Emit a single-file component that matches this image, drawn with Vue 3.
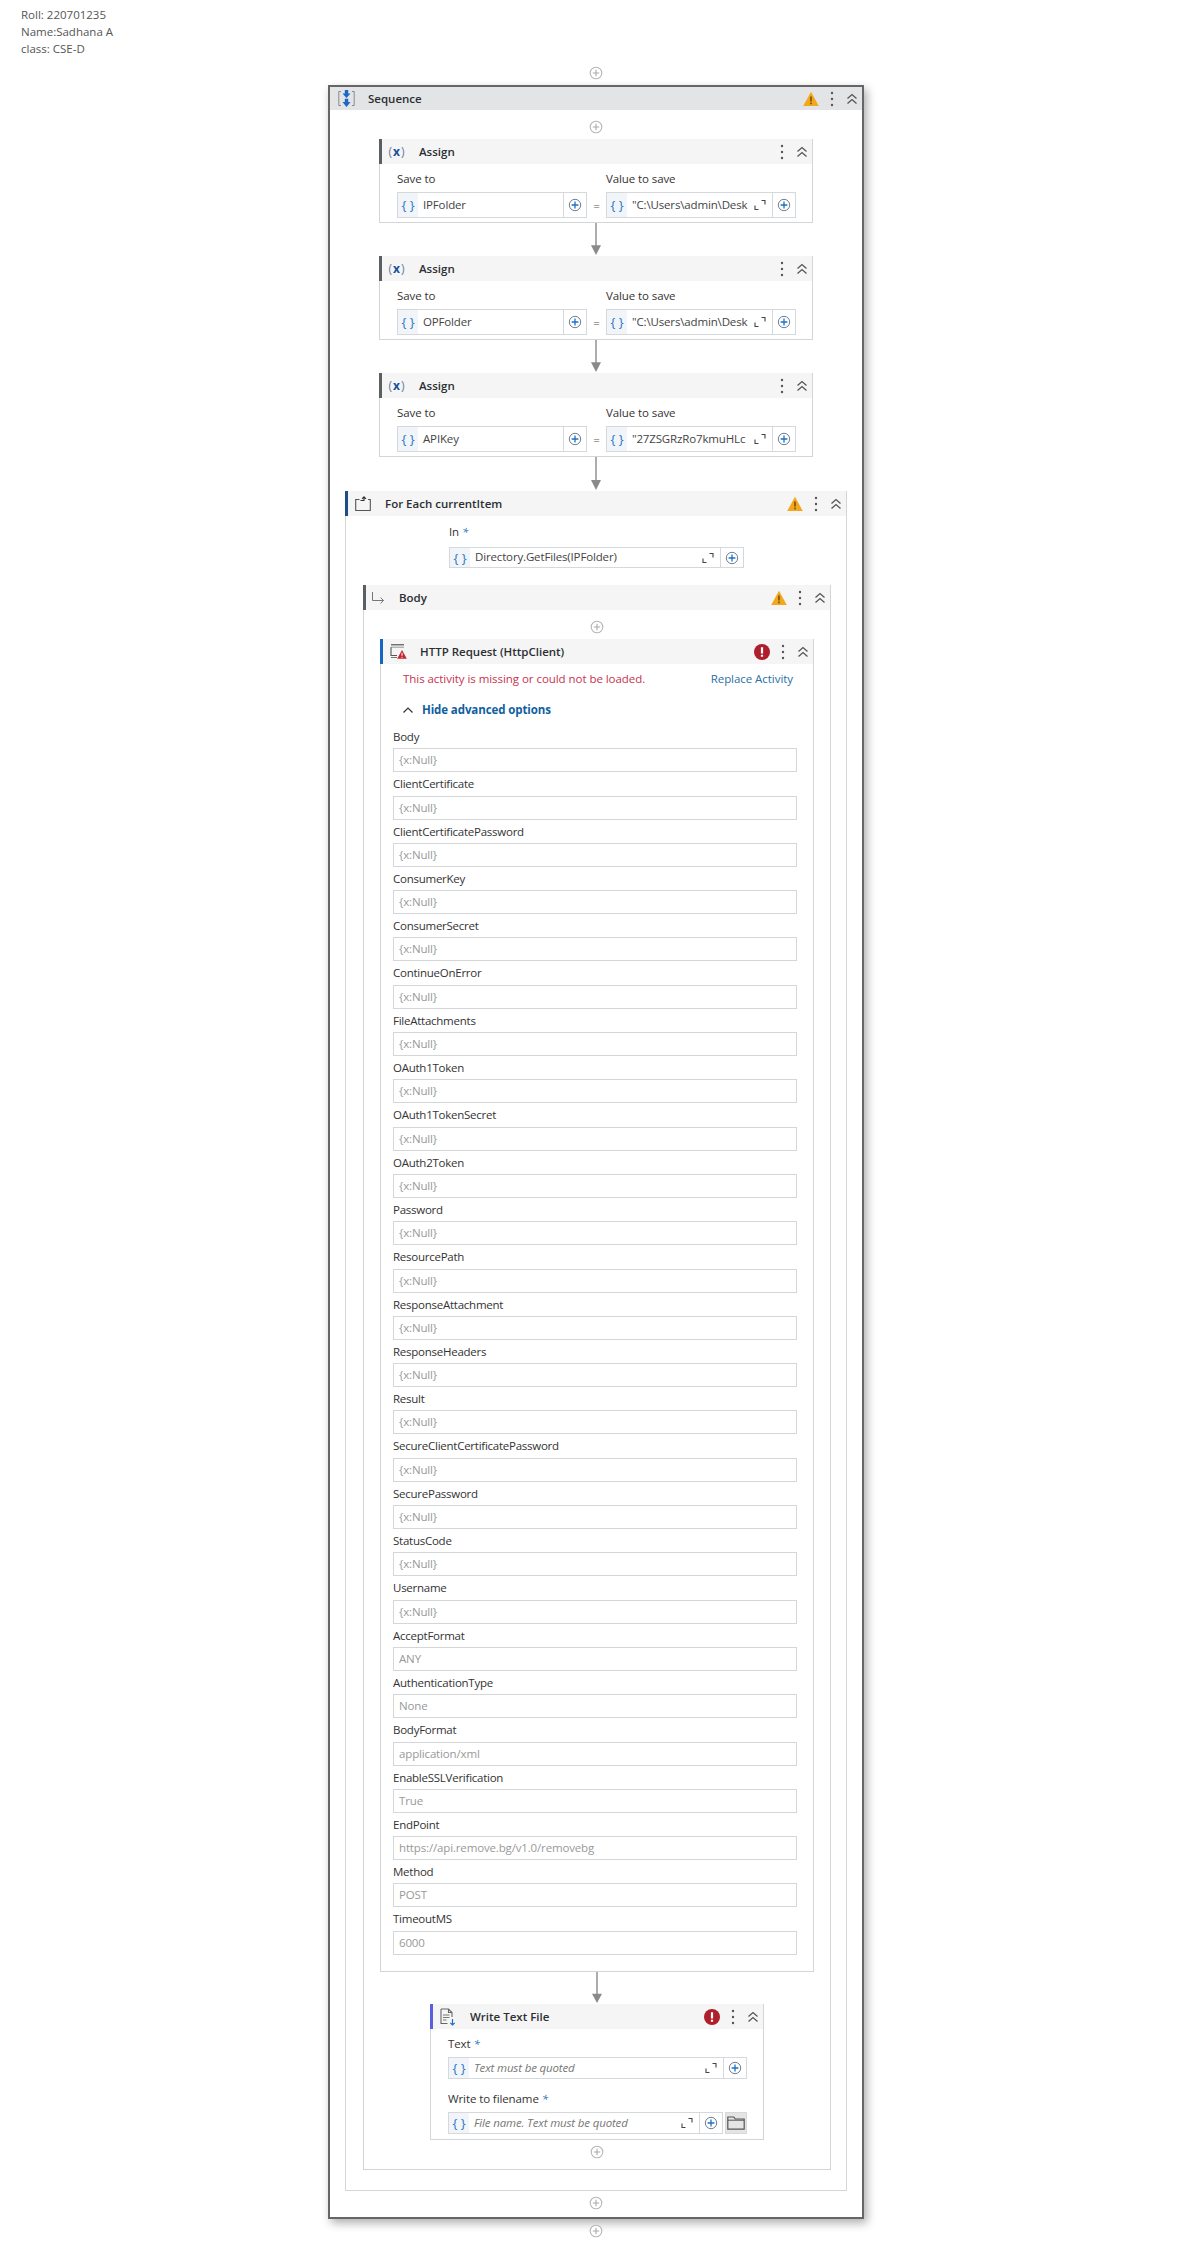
<script setup>
const assigns = [
  { to: 'IPFolder', value: '"C:\\Users\\admin\\Desk' },
  { to: 'OPFolder', value: '"C:\\Users\\admin\\Desk' },
  { to: 'APIKey', value: '"27ZSGRzRo7kmuHLc' },
]

const nullFields = [
  'Body', 'ClientCertificate', 'ClientCertificatePassword', 'ConsumerKey', 'ConsumerSecret',
  'ContinueOnError', 'FileAttachments', 'OAuth1Token', 'OAuth1TokenSecret', 'OAuth2Token',
  'Password', 'ResourcePath', 'ResponseAttachment', 'ResponseHeaders', 'Result',
  'SecureClientCertificatePassword', 'SecurePassword', 'StatusCode', 'Username',
]

const fields = [
  ...nullFields.map((name) => ({ name, value: '{x:Null}' })),
  { name: 'AcceptFormat', value: 'ANY' },
  { name: 'AuthenticationType', value: 'None' },
  { name: 'BodyFormat', value: 'application/xml' },
  { name: 'EnableSSLVerification', value: 'True' },
  { name: 'EndPoint', value: 'https://api.remove.bg/v1.0/removebg' },
  { name: 'Method', value: 'POST' },
  { name: 'TimeoutMS', value: '6000' },
]
</script>

<template>
  <div class="page">
    <svg class="defs" aria-hidden="true">
      <symbol id="i-add" viewBox="0 0 14 14">
        <circle cx="7" cy="7" r="5.8" fill="#fff" stroke="#b4b6b8" stroke-width="1.1" />
        <path d="M7 3.8v6.4M3.8 7h6.4" stroke="#a8aaac" stroke-width="1.1" />
      </symbol>
      <symbol id="i-plus" viewBox="0 0 14 14">
        <circle cx="7" cy="7" r="5.7" fill="none" stroke="#6f7f90" stroke-width="1" />
        <path d="M7 3.6v6.8M3.600 7h6.800" stroke="#1f6fc8" stroke-width="1.300" />
      </symbol>
      <symbol id="i-expand" viewBox="0 0 12 12">
        <path d="M1 6.500v4h3.500M7.500 1.500H11v4" fill="none" stroke="#444" stroke-width="1.100" />
      </symbol>
      <symbol id="i-dots" viewBox="0 0 4 16">
        <circle cx="2" cy="2" r="1.200" fill="#555" />
        <circle cx="2" cy="8" r="1.200" fill="#555" />
        <circle cx="2" cy="14" r="1.200" fill="#555" />
      </symbol>
      <symbol id="i-chev" viewBox="0 0 12 12">
        <path d="M1.500 5.500 6 1.500l4.500 4M1.500 10.500 6 6.500l4.500 4" fill="none" stroke="#555" stroke-width="1.300" />
      </symbol>
      <symbol id="i-warn" viewBox="0 0 16 16">
        <path d="M8 .8 15.800 15H.2z" fill="#f2a81d" />
        <path d="M8 5.400v5.200M8 11.600v1.600" stroke="#5a3c00" stroke-width="1.300" />
      </symbol>
      <symbol id="i-error" viewBox="0 0 16 16">
        <circle cx="8" cy="8" r="8" fill="#ae1f2b" />
        <path d="M8 3.200v6.200M8 10.800v2" stroke="#fff" stroke-width="2.200" />
      </symbol>
    </svg>

    <div class="note">
      <div>Roll: 220701235</div>
      <div>Name:Sadhana A</div>
      <div>class: CSE-D</div>
    </div>

    <div class="add top"><svg class="add-ic"><use href="#i-add" /></svg></div>

    <section class="sequence">
      <header class="head seq-head">
        <span class="head-ic seq-ic">
          <svg width="17" height="17" viewBox="0 0 17 17">
            <path d="M3 1.500H.8v14H3M14 1.500h2.200v14H14" fill="none" stroke="#8a8a8a" stroke-width="1" />
            <path d="M6.800 0h3.400v3.500h2.300L8.500 8 4.500 3.500h2.300zM6.800 8.800h3.400v3.200h2.300l-4 5-4-5h2.300z" fill="#1b69c4" />
          </svg>
        </span>
        <span class="title">Sequence</span>
        <span class="tool"><svg width="16" height="16"><use href="#i-warn" /></svg></span>
        <span class="tool"><svg width="4" height="16"><use href="#i-dots" /></svg></span>
        <span class="tool chev"><svg width="12" height="12"><use href="#i-chev" /></svg></span>
      </header>

      <div class="seq-body">
        <div class="add first"><svg class="add-ic"><use href="#i-add" /></svg></div>

        <template v-for="(item, i) in assigns" :key="item.to">
          <div class="card assign">
            <header class="head">
              <span class="head-ic var-ic">(<b>x</b>)</span>
              <span class="title">Assign</span>
              <span class="tool"><svg width="4" height="16"><use href="#i-dots" /></svg></span>
              <span class="tool chev"><svg width="12" height="12"><use href="#i-chev" /></svg></span>
            </header>
            <div class="assign-body">
              <div class="assign-col">
                <div class="label">Save to</div>
                <div class="expr tall">
                  <span class="curly">{ }</span>
                  <span class="val">{{ item.to }}</span>
                  <span class="cell"><svg width="14" height="14"><use href="#i-plus" /></svg></span>
                </div>
              </div>
              <span class="equals">=</span>
              <div class="assign-col">
                <div class="label">Value to save</div>
                <div class="expr tall">
                  <span class="curly">{ }</span>
                  <span class="val">{{ item.value }}</span>
                  <span class="exp"><svg width="12" height="12"><use href="#i-expand" /></svg></span>
                  <span class="cell"><svg width="14" height="14"><use href="#i-plus" /></svg></span>
                </div>
              </div>
            </div>
          </div>
          <svg class="arrow" :class="i === 2 ? 'h34' : 'h33'" viewBox="0 0 14 34" preserveAspectRatio="none">
            <path d="M7 0v26" stroke="#8a8a8a" stroke-width="1.400" />
            <path d="M2 23h10l-5 10z" fill="#8a8a8a" />
          </svg>
        </template>

        <section class="card foreach">
          <header class="head">
            <span class="head-ic">
              <svg width="16" height="15" viewBox="0 0 16 15">
                <path d="M4.500 3.500H.7v11h14.600v-11H13" fill="none" stroke="#555" stroke-width="1.100" />
                <path d="M5.500 4.500h3.500V1M7 2.800 9 .8l2 2" fill="none" stroke="#333" stroke-width="1.100" />
              </svg>
            </span>
            <span class="title">For Each currentItem</span>
            <span class="tool"><svg width="16" height="16"><use href="#i-warn" /></svg></span>
            <span class="tool"><svg width="4" height="16"><use href="#i-dots" /></svg></span>
            <span class="tool chev"><svg width="12" height="12"><use href="#i-chev" /></svg></span>
          </header>

          <div class="in-wrap">
            <div class="label">In <i class="req">*</i></div>
            <div class="expr">
              <span class="curly">{ }</span>
              <span class="val">Directory.GetFiles(IPFolder)</span>
              <span class="exp"><svg width="12" height="12"><use href="#i-expand" /></svg></span>
              <span class="cell"><svg width="14" height="14"><use href="#i-plus" /></svg></span>
            </div>
          </div>

          <section class="card body-card">
            <header class="head">
              <span class="head-ic body-ic">
                <svg width="14" height="12" viewBox="0 0 14 12">
                  <path d="M1.500 0v8.500h11M9.500 5.500l3 3-3 3" fill="none" stroke="#777" stroke-width="1" />
                </svg>
              </span>
              <span class="title">Body</span>
              <span class="tool"><svg width="16" height="16"><use href="#i-warn" /></svg></span>
              <span class="tool"><svg width="4" height="16"><use href="#i-dots" /></svg></span>
              <span class="tool chev"><svg width="12" height="12"><use href="#i-chev" /></svg></span>
            </header>

            <div class="body-inner">
              <div class="add mid"><svg class="add-ic"><use href="#i-add" /></svg></div>

              <section class="card http">
                <header class="head">
                  <span class="head-ic">
                    <svg width="17" height="15" viewBox="0 0 17 15">
                      <path d="M1 .8h13" stroke="#444" stroke-width="1.100" />
                      <path d="M1 3.200h13" stroke="#999" stroke-width="1" />
                      <path d="M1 3.200v8.300h6" fill="none" stroke="#555" stroke-width="1.100" />
                      <path d="M1 13.500h6" stroke="#777" stroke-width="1" />
                      <path d="M12 6 16.800 14.800H7.200z" fill="#c4262e" />
                      <path d="M12 8.800v3M12 12.800v1" stroke="#fff" stroke-width="1" />
                    </svg>
                  </span>
                  <span class="title">HTTP Request (HttpClient)</span>
                  <span class="tool"><svg width="16" height="16"><use href="#i-error" /></svg></span>
                  <span class="tool"><svg width="4" height="16"><use href="#i-dots" /></svg></span>
                  <span class="tool chev"><svg width="12" height="12"><use href="#i-chev" /></svg></span>
                </header>

                <div class="missing">
                  <span class="missing-text">This activity is missing or could not be loaded.</span>
                  <span class="replace">Replace Activity</span>
                </div>
                <div class="advanced">
                  <svg width="10" height="6" viewBox="0 0 10 6">
                    <path d="M.5 5.500 5 1l4.500 4.500" fill="none" stroke="#333" stroke-width="1.200" />
                  </svg>
                  <span>Hide advanced options</span>
                </div>

                <div class="fields">
                  <div v-for="field in fields" :key="field.name" class="field">
                    <div class="field-label">{{ field.name }}</div>
                    <div class="field-input">{{ field.value }}</div>
                  </div>
                </div>
              </section>

              <svg class="arrow h32" viewBox="0 0 14 34" preserveAspectRatio="none">
                <path d="M7 0v26" stroke="#8a8a8a" stroke-width="1.400" />
                <path d="M2 23h10l-5 10z" fill="#8a8a8a" />
              </svg>

              <section class="card write">
                <header class="head">
                  <span class="head-ic">
                    <svg width="16" height="18" viewBox="0 0 16 18">
                      <path d="M1 1h7.500L12 4.500V9M1 1v14.500h6.500M8.500 1v3.500H12" fill="none" stroke="#666" stroke-width="1.100" />
                      <path d="M3 7h6.500M3 9.500h6.500M3 12h3.500" stroke="#777" stroke-width="1" />
                      <path d="M12.500 11v6M10.300 14.800l2.200 2.200 2.200-2.200" fill="none" stroke="#1b6fc4" stroke-width="1.200" />
                    </svg>
                  </span>
                  <span class="title">Write Text File</span>
                  <span class="tool"><svg width="16" height="16"><use href="#i-error" /></svg></span>
                  <span class="tool"><svg width="4" height="16"><use href="#i-dots" /></svg></span>
                  <span class="tool chev"><svg width="12" height="12"><use href="#i-chev" /></svg></span>
                </header>

                <div class="write-body">
                  <div class="label">Text <i class="req">*</i></div>
                  <div class="expr">
                    <span class="curly">{ }</span>
                    <span class="val hint">Text must be quoted</span>
                    <span class="exp"><svg width="12" height="12"><use href="#i-expand" /></svg></span>
                    <span class="cell"><svg width="14" height="14"><use href="#i-plus" /></svg></span>
                  </div>
                  <div class="label second">Write to filename <i class="req">*</i></div>
                  <div class="file-row">
                    <div class="expr">
                      <span class="curly">{ }</span>
                      <span class="val hint">File name. Text must be quoted</span>
                      <span class="exp"><svg width="12" height="12"><use href="#i-expand" /></svg></span>
                      <span class="cell"><svg width="14" height="14"><use href="#i-plus" /></svg></span>
                    </div>
                    <span class="folder">
                      <svg width="18" height="14" viewBox="0 0 18 14">
                        <path d="M.8 13.200V1h6l1.500 2h8.900v10.200z" fill="none" stroke="#555" stroke-width="1.200" />
                        <path d="M1 4.200h16" stroke="#555" stroke-width="1" />
                      </svg>
                    </span>
                  </div>
                </div>
              </section>

              <div class="add after-write"><svg class="add-ic"><use href="#i-add" /></svg></div>
            </div>
          </section>
        </section>

        <div class="add last"><svg class="add-ic"><use href="#i-add" /></svg></div>
      </div>
    </section>

    <div class="add bottom"><svg class="add-ic"><use href="#i-add" /></svg></div>
  </div>
</template>

<style scoped>
.page {
  width: 1192px;
  height: 2243px;
  overflow: hidden;
  font-family: "Open Sans", "Noto Sans", sans-serif;
  font-size: 11.5px;
  color: #333;
}

.defs {
  position: absolute;
  width: 0;
  height: 0;
}

.note {
  padding: 6px 0 0 21px;
  height: 60px;
  box-sizing: border-box;
  line-height: 17px;
  color: #555;
}

.add {
  display: flex;
  justify-content: center;
  height: 14px;
}

.add-ic {
  width: 14px;
  height: 14px;
}

.add.top {
  width: 1192px;
  margin-top: 6px;
}

.add.first,
.add.mid {
  margin: 10px 0 5px;
}

.add.after-write {
  margin: 5px 0 10px;
}

.add.last {
  margin: 5px 0 9px;
}

.add.bottom {
  width: 1192px;
  margin-top: 5px;
}

.sequence {
  box-sizing: border-box;
  width: 536px;
  height: 2134px;
  margin: 5px 0 0 328px;
  border: 2px solid #666;
  background: #fff;
  box-shadow: 3px 4px 9px rgba(0, 0, 0, 0.32);
}

.head {
  box-sizing: border-box;
  display: flex;
  align-items: center;
  height: 25px;
  margin: -1px 0 0 -1px;
  border-left: 3px solid var(--accent);
  background: #f5f5f5;
}

.seq-head {
  height: 23px;
  margin: 0;
  border-left: 0;
  background: #e3e4e6;
}

.head-ic {
  flex: none;
  display: flex;
  align-items: center;
  justify-content: center;
  box-sizing: border-box;
  width: 37px;
  padding-right: 7px;
}

.seq-ic {
  width: 38px;
  padding-right: 6px;
}

.body-ic {
  width: 33px;
  padding-right: 9px;
}

.var-ic {
  font-size: 12px;
  color: #5f7fa6;
  letter-spacing: 1px;
}

.var-ic b {
  color: #1b4f9c;
}

.title {
  flex: 1;
  font-weight: 600;
  font-size: 11.5px;
  color: #2b2f33;
}

.tool {
  flex: none;
  display: flex;
  align-items: center;
  justify-content: center;
  width: 21px;
}

.chev {
  width: 20px;
  padding-right: 1px;
  box-sizing: border-box;
}

.seq-body {
  display: flex;
  flex-direction: column;
  align-items: center;
}

.card {
  box-sizing: border-box;
  flex: none;
  border: 1px solid #d3d6d8;
  background: #fff;
}

.assign {
  --accent: #5c5f62;
  width: 434px;
  height: 84px;
}

.assign-body {
  display: flex;
  align-items: flex-end;
  padding: 4px 16px 0 17px;
}

.assign-col {
  width: 190px;
}

.equals {
  flex: 1;
  text-align: center;
  line-height: 24px;
  color: #555;
}

.label {
  height: 24px;
  line-height: 22px;
  letter-spacing: -0.1px;
  color: #333;
}

.req {
  color: #2d6fb8;
}

.expr {
  box-sizing: border-box;
  display: flex;
  align-items: center;
  flex: 1;
  height: 22px;
  border: 1px solid #d6d9dc;
  background: #fff;
}

.expr.tall {
  height: 26px;
}

.curly {
  flex: none;
  align-self: stretch;
  display: flex;
  align-items: center;
  justify-content: center;
  width: 20px;
  background: #f1f4f8;
  color: #2d78c2;
  font-size: 13px;
}

.val {
  flex: 1;
  min-width: 0;
  overflow: hidden;
  white-space: nowrap;
  padding: 0 0 2px 5px;
  letter-spacing: -0.15px;
  color: #444;
}

.hint {
  font-style: italic;
  color: #777;
}

.exp {
  flex: none;
  display: flex;
  justify-content: center;
  width: 24px;
}

.cell {
  flex: none;
  align-self: stretch;
  display: flex;
  align-items: center;
  justify-content: center;
  width: 22px;
  border-left: 1px solid #d6d9dc;
}

.arrow {
  flex: none;
  display: block;
  width: 14px;
}

.h32 {
  height: 32px;
}

.h33 {
  height: 33px;
}

.h34 {
  height: 34px;
}

.foreach {
  --accent: #1c4f86;
  width: 502px;
  height: 1700px;
}

.in-wrap {
  width: 295px;
  margin: 5px 0 0 103px;
}

.in-wrap .label {
  margin-bottom: 2px;
}

.in-wrap .expr {
  height: 21px;
}

.body-card {
  --accent: #5c5f62;
  width: 468px;
  height: 1585px;
  margin: 17px 0 0 17px;
}

.body-inner {
  display: flex;
  flex-direction: column;
  align-items: center;
}

.http {
  --accent: #1665c0;
  width: 434px;
  height: 1333px;
}

.missing {
  display: flex;
  justify-content: space-between;
  padding: 6px 20px 0 22px;
  line-height: 17px;
  letter-spacing: -0.05px;
}

.missing-text {
  color: #c8324f;
}

.replace {
  color: #2a6fa8;
}

.advanced {
  display: flex;
  align-items: center;
  gap: 9px;
  padding: 14px 0 0 22px;
  line-height: 18px;
  font-weight: 700;
  font-size: 11.5px;
  letter-spacing: -0.1px;
  color: #10609f;
}

.fields {
  padding: 6px 16px 0 12px;
}

.field-label {
  height: 23.3px;
  line-height: 23px;
  letter-spacing: -0.25px;
  color: #333;
}

.field-input {
  box-sizing: border-box;
  height: 24px;
  padding-left: 5px;
  border: 1px solid #d4d6d8;
  line-height: 22px;
  letter-spacing: -0.15px;
  color: #999;
}

.write {
  --accent: #5a5fe0;
  width: 334px;
  height: 136px;
}

.write-body {
  padding: 4px 16px 0 17px;
}

.label.second {
  margin-top: 9px;
}

.file-row {
  display: flex;
  gap: 2px;
}

.folder {
  flex: none;
  display: flex;
  align-items: center;
  justify-content: center;
  width: 22px;
  height: 22px;
  background: #e4e4e4;
  border: 1px solid #d6d9dc;
  box-sizing: border-box;
}
</style>

<style>
html,
body {
  background: #fff;
}
</style>
